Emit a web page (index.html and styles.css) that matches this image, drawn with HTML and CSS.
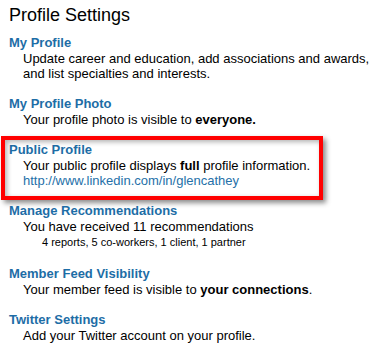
FILE: index.html
```html
<!DOCTYPE html>
<html>

<head>
    <link rel="stylesheet" href="styles.css">
</head>

<body>
    <div class="page">
        <h1 class="page-title">Profile Settings</h1>

        <div class="setting">
            <a class="setting-name">My Profile</a>
            <div class="setting-desc">Update career and education, add associations and awards, and list specialties and interests.</div>
        </div>

        <div class="setting">
            <a class="setting-name">My Profile Photo</a>
            <div class="setting-desc">Your profile photo is visible to <b>everyone.</b></div>
        </div>

        <div class="setting highlight">
            <a class="setting-name">Public Profile</a>
            <div class="setting-desc">Your public profile displays <b>full</b> profile information.</div>
            <div class="setting-desc"><a class="setting-url">http://www.linkedin.com/in/glencathey</a></div>
        </div>

        <div class="setting">
            <a class="setting-name">Manage Recommendations</a>
            <div class="setting-desc">You have received 11 recommendations</div>
            <div class="setting-sub">4 reports, 5 co-workers, 1 client, 1 partner</div>
        </div>

        <div class="setting">
            <a class="setting-name">Member Feed Visibility</a>
            <div class="setting-desc">Your member feed is visible to <b>your connections</b>.</div>
        </div>

        <div class="setting">
            <a class="setting-name">Twitter Settings</a>
            <div class="setting-desc">Add your Twitter account on your profile.</div>
        </div>
    </div>
</body>

</html>
```

FILE: styles.css
```css
body {
    margin: 0;
    background-color: #ffffff;
    font-family: 'Liberation Sans', Arial, sans-serif;
    color: #000000;
}

.page {
    padding: 4px 0 0 9px;
}

.page-title {
    font-size: 18px;
    line-height: 22px;
    font-weight: normal;
    margin: 0 0 9px 0;
}

.setting {
    position: relative;
    padding-bottom: 15px;
}

.setting-name {
    display: block;
    font-size: 13px;
    line-height: 16px;
    font-weight: bold;
    color: #1d6da6;
}

.setting-desc {
    font-size: 13px;
    line-height: 15px;
    padding-left: 14px;
    padding-right: 2px;
}

.setting-url {
    color: #2570a8;
}

.setting-sub {
    font-size: 11px;
    line-height: 17px;
    padding-left: 33px;
}

/* red callout round the public profile */
.highlight::before {
    content: "";
    position: absolute;
    top: -6px;
    left: -8px;
    width: 322px;
    height: 64px;
    box-sizing: border-box;
    border: 4px solid #ff0000;
    box-shadow: 3px 3px 5px rgba(0, 0, 0, 0.45), inset 2px 2px 5px rgba(0, 0, 0, 0.3);
    pointer-events: none;
}
```
